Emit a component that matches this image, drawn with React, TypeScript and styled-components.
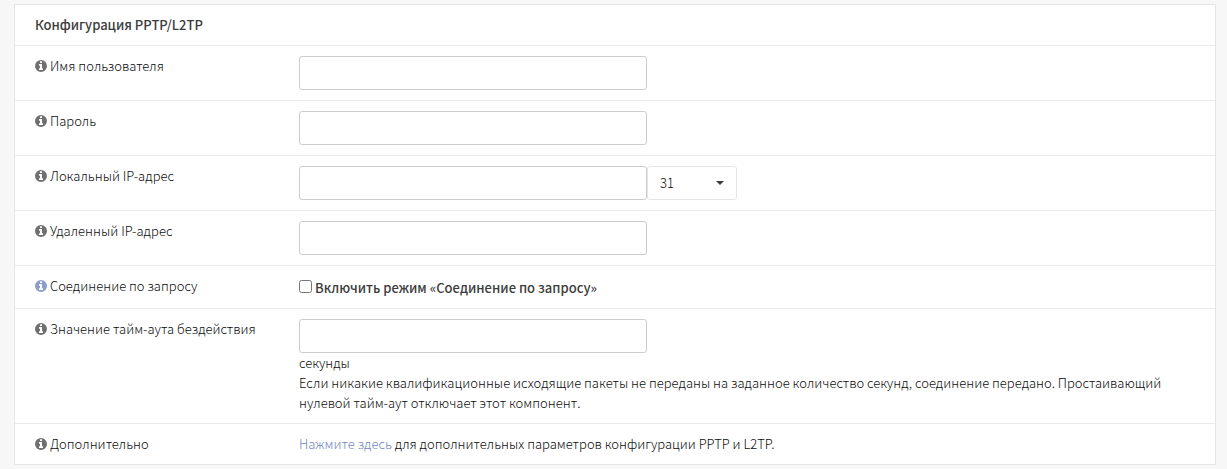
import React, { useId } from "react";
import type { ReactNode } from "react";
import styled, { createGlobalStyle } from "styled-components";

const GlobalStyle = createGlobalStyle`
  *, *::before, *::after { box-sizing: border-box; }

  body {
    margin: 0;
    background: #f7f7f7;
    color: #0c0c0c;
    font-family: "Noto Sans CJK SC", "Noto Sans", sans-serif;
    font-size: 13px;
    font-weight: 300;
    line-height: 20px;
  }
`;

const Page = styled.main`
  padding: 4px 11px 4px 14px;
`;

const Panel = styled.form`
  background: #fff;
  border: 1px solid #e5e5e5;
`;

const PanelTitle = styled.h2`
  margin: 0;
  padding: 10px 20px;
  color: #3c3c3b;
  font-size: 13px;
  font-weight: 500;
`;

const Row = styled.div`
  display: grid;
  grid-template-columns: 22% minmax(0, 1fr);
  border-top: 1px solid #ebebeb;
`;

const LabelCell = styled.div`
  display: flex;
  align-items: flex-start;
  gap: 3px;
  padding: 10px 0 10px 20px;
`;

const InfoButton = styled.button<{ $active?: boolean }>`
  display: flex;
  align-items: center;
  height: 20px;
  padding: 0;
  border: 0;
  background: none;
  color: ${(p) => (p.$active ? "#8b9dca" : "#707070")};
  cursor: pointer;
`;

const FieldCell = styled.div`
  padding: 10px 20px;
`;

const FieldLine = styled.div`
  display: flex;
`;

const TextInput = styled.input`
  display: block;
  width: 100%;
  max-width: 348px;
  height: 34px;
  padding: 6px 12px;
  border: 1px solid #ccc;
  border-radius: 3px;
  background: #fff;
  color: inherit;
  font: inherit;
`;

const SelectBox = styled.div`
  display: grid;
  flex: none;
  width: 90px;
  align-items: center;

  & > * {
    grid-area: 1 / 1;
  }
`;

const Select = styled.select`
  appearance: none;
  width: 100%;
  height: 34px;
  padding: 0 12px;
  border: 1px solid #e5e5e5;
  border-radius: 3px;
  background: #fff;
  color: inherit;
  font: inherit;
`;

const Caret = styled.svg`
  justify-self: end;
  margin-right: 13px;
  pointer-events: none;
`;

const CheckLabel = styled.label`
  display: flex;
  align-items: flex-start;
  gap: 3px;
  height: 22px;
  color: #3c3c3b;
  font-weight: 500;
  line-height: 24px;
`;

const Checkbox = styled.input`
  width: 13px;
  height: 13px;
  margin: 4px 0 0;
`;

const Help = styled.p`
  margin: 0;
`;

const Link = styled.a`
  color: #7288c4;
  text-decoration: none;
`;

function InfoIcon() {
  return (
    <svg width="12" height="12" viewBox="0 0 1536 1536" fill="currentColor" aria-hidden="true">
      <path
        fillRule="evenodd"
        d="M768 0a768 768 0 1 0 0 1536a768 768 0 1 0 0-1536z M544 512h320q32 0 32 32v512h96q32 0 32 32v160q0 32-32 32H544q-32 0-32-32v-160q0-32 32-32h96V736h-96q-32 0-32-32V544q0-32 32-32z M672 160h192q32 0 32 32v160q0 32-32 32H672q-32 0-32-32V192q0-32 32-32z"
      />
    </svg>
  );
}

type SettingProps = {
  label: string;
  active?: boolean;
  bare?: boolean;
  children: (id: string) => ReactNode;
};

function Setting({ label, active, bare, children }: SettingProps) {
  const id = useId();
  return (
    <Row>
      <LabelCell>
        <InfoButton type="button" aria-label={label} $active={active}>
          <InfoIcon />
        </InfoButton>
        {bare ? <span>{label}</span> : <label htmlFor={id}>{label}</label>}
      </LabelCell>
      <FieldCell>{children(id)}</FieldCell>
    </Row>
  );
}

const masks = Array.from({ length: 32 }, (_, i) => 31 - i);

export default function App() {
  return (
    <Page>
      <GlobalStyle />
      <Panel>
        <PanelTitle>Конфигурация PPTP/L2TP</PanelTitle>
        <Setting label="Имя пользователя">
          {(id) => <TextInput id={id} type="text" autoComplete="off" />}
        </Setting>
        <Setting label="Пароль">
          {(id) => <TextInput id={id} type="password" autoComplete="off" />}
        </Setting>
        <Setting label="Локальный IP-адрес">
          {(id) => (
            <FieldLine>
              <TextInput id={id} type="text" />
              <SelectBox>
                <Select aria-label="Маска подсети" defaultValue={31}>
                  {masks.map((m) => (
                    <option key={m} value={m}>
                      {m}
                    </option>
                  ))}
                </Select>
                <Caret width="8" height="4" viewBox="0 0 8 4" aria-hidden="true">
                  <path d="M0 0h8L4 4z" fill="#3c3c3b" />
                </Caret>
              </SelectBox>
            </FieldLine>
          )}
        </Setting>
        <Setting label="Удаленный IP-адрес">
          {(id) => <TextInput id={id} type="text" />}
        </Setting>
        <Setting label="Соединение по запросу" active bare>
          {() => (
            <CheckLabel>
              <Checkbox type="checkbox" />
              Включить режим «Соединение по запросу»
            </CheckLabel>
          )}
        </Setting>
        <Setting label="Значение тайм-аута бездействия">
          {(id) => (
            <>
              <TextInput id={id} type="text" />
              <Help>секунды</Help>
              <Help>
                Если никакие квалификационные исходящие пакеты не переданы на заданное количество
                секунд, соединение передано. Простаивающий нулевой тайм-аут отключает этот
                компонент.
              </Help>
            </>
          )}
        </Setting>
        <Setting label="Дополнительно" bare>
          {() => (
            <Help>
              <Link href="#advanced">Нажмите здесь</Link> для дополнительных параметров
              конфигурации PPTP и L2TP.
            </Help>
          )}
        </Setting>
      </Panel>
    </Page>
  );
}
